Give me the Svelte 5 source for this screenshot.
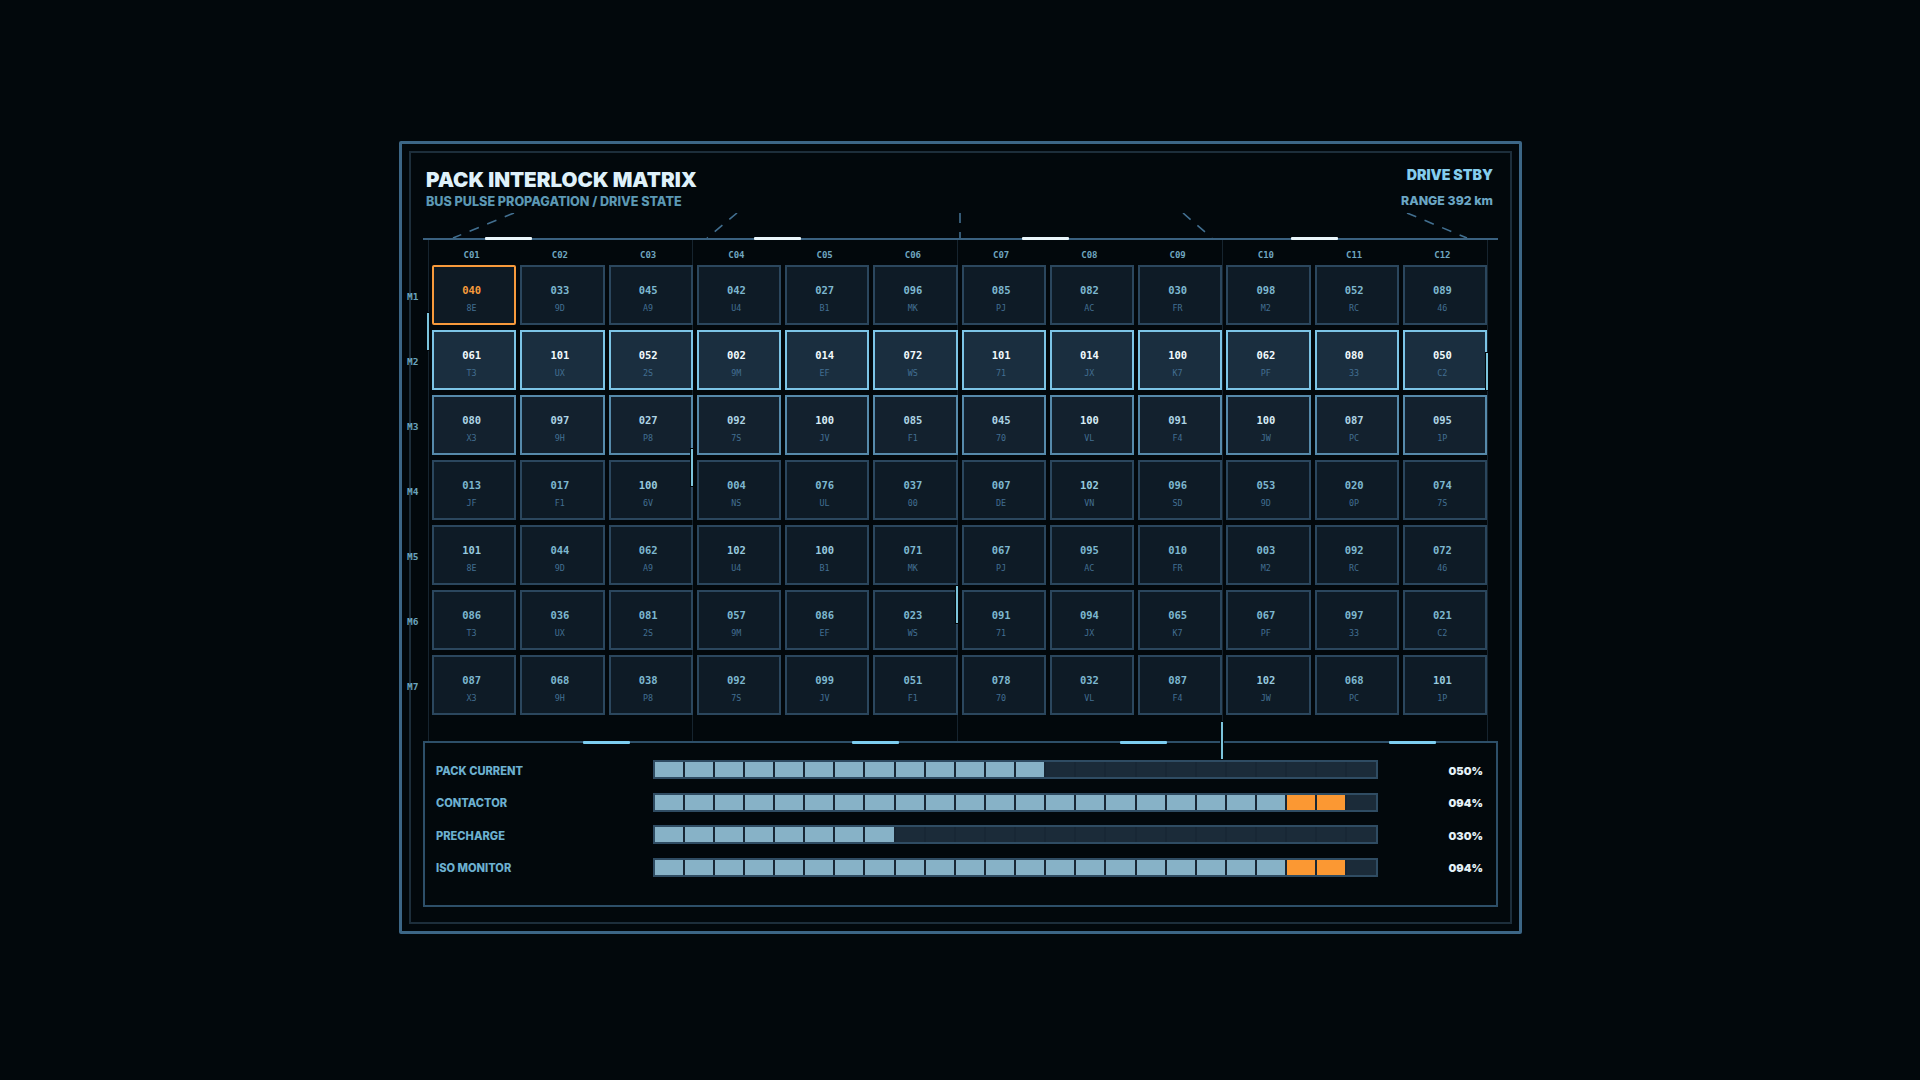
<script>
    const subs = [
        "8E 9D A9 U4 B1 MK PJ AC FR M2 RC 46",
        "T3 UX 2S 9M EF WS 71 JX K7 PF 33 C2",
        "X3 9H P8 7S JV F1 70 VL F4 JW PC 1P",
        "JF F1 6V NS UL 00 DE VN SD 9D 0P 7S",
        "8E 9D A9 U4 B1 MK PJ AC FR M2 RC 46",
        "T3 UX 2S 9M EF WS 71 JX K7 PF 33 C2",
        "X3 9H P8 7S JV F1 70 VL F4 JW PC 1P",
    ].map((r) => r.split(" "));

    const values = [
        "040 033 045 042 027 096 085 082 030 098 052 089",
        "061 101 052 002 014 072 101 014 100 062 080 050",
        "080 097 027 092 100 085 045 100 091 100 087 095",
        "013 017 100 004 076 037 007 102 096 053 020 074",
        "101 044 062 102 100 071 067 095 010 003 092 072",
        "086 036 081 057 086 023 091 094 065 067 097 021",
        "087 068 038 092 099 051 078 032 087 102 068 101",
    ].map((r) => r.split(" "));

    const columns = Array.from({ length: 12 }, (_, i) => "C" + String(i + 1).padStart(2, "0"));
    const rows = values.map((_, i) => "M" + (i + 1));

    // offsets from the matrix origin (423, 240)
    const gridLines = [5, 269, 534, 799, 1064];
    const pulses = [
        { x: 4, y: 73 },
        { x: 268, y: 209 },
        { x: 533, y: 346 },
        { x: 798, y: 482 },
        { x: 1063, y: 113 },
    ];
    const brightTop = [62, 331, 599, 868];
    const brightBottom = [160, 429, 697, 966];

    // each dash line runs from its top end, so the dash pattern starts up there
    const fan = [
        [91, 0, 30, 25],
        [314, 0, 284, 25],
        [537, 0, 537, 25],
        [760, 0, 789, 25],
        [984, 0, 1044, 25],
    ];

    const meters = [
        { name: "PACK CURRENT", pct: "050%", on: 13, warn: 0 },
        { name: "CONTACTOR", pct: "094%", on: 21, warn: 2 },
        { name: "PRECHARGE", pct: "030%", on: 8, warn: 0 },
        { name: "ISO MONITOR", pct: "094%", on: 21, warn: 2 },
    ];
    const slots = Array.from({ length: 24 }, (_, i) => i);
</script>

<div class="page">
    <div class="frame">
        <div class="inner">
            <header class="head">
                <div>
                    <h1>PACK INTERLOCK MATRIX</h1>
                    <p class="sub">BUS PULSE PROPAGATION / DRIVE STATE</p>
                </div>
                <div class="status">
                    <div class="drive">DRIVE STBY</div>
                    <div class="range">RANGE 392 km</div>
                </div>
                <svg class="fan" width="1075" height="26" viewBox="0 0 1075 26">
                    {#each fan as [x1, y1, x2, y2]}
                        <line {x1} {y1} x2={x2} y2={y2} />
                    {/each}
                </svg>
            </header>

            <div class="rule">
                {#each brightTop as x}
                    <span class="tick" style="left: {x}px"></span>
                {/each}
            </div>

            <div class="matrix">
                {#each gridLines as x}
                    <span class="vline" style="left: {x}px"></span>
                {/each}

                <div class="row-labels">
                    {#each rows as m}
                        <div class="row-label">{m}</div>
                    {/each}
                </div>

                <div class="grid">
                    {#each columns as c}
                        <div class="col-label">{c}</div>
                    {/each}
                    {#each values as row, r}
                        {#each row as v, c}
                            <div
                                class="cell"
                                class:active={r === 1}
                                class:near={r === 2}
                                class:hi={Number(v) >= 100}
                                class:fault={r === 0 && c === 0}
                            >
                                <span class="num">{v}</span>
                                <span class="tag">{subs[r][c]}</span>
                            </div>
                        {/each}
                    {/each}
                </div>
            </div>

            <section class="panel">
                {#each brightBottom as x}
                    <span class="tick soft" style="left: {x}px"></span>
                {/each}
                {#each meters as m}
                    <div class="meter">
                        <span class="name">{m.name}</span>
                        <div class="bar">
                            {#each slots as i}
                                <span
                                    class="seg"
                                    class:on={i < m.on}
                                    class:warn={i >= m.on && i < m.on + m.warn}
                                ></span>
                            {/each}
                        </div>
                        <span class="pct">{m.pct}</span>
                    </div>
                {/each}
            </section>

            {#each pulses as p}
                <span class="pulse" style="left: {p.x + 12}px; top: {p.y + 87}px"></span>
            {/each}
        </div>
    </div>
</div>

<style>
    :global(body) {
        background: #02080c;
    }

    .page {
        min-height: 1080px;
        box-sizing: border-box;
        padding: 141px 0 0 399px;
        font-family: Inter, "Liberation Sans", sans-serif;
    }

    .frame {
        width: 1123px;
        height: 793px;
        box-sizing: border-box;
        padding: 7px;
        border: 3px solid #3c6686;
        border-radius: 2px;
    }

    .inner {
        position: relative;
        height: 100%;
        box-sizing: border-box;
        padding: 0 12px;
        border: 2px solid #1d2e3b;
    }

    .head {
        position: relative;
        display: flex;
        justify-content: space-between;
        height: 85px;
        box-sizing: border-box;
        padding: 15px 5px 0 3px;
    }

    h1 {
        margin: 0;
        font-size: 20.6px;
        line-height: 24px;
        font-weight: 900;
        color: #dff1fa;
    }

    .sub {
        margin: 2px 0 0;
        font-size: 12.6px;
        line-height: 15px;
        font-weight: 800;
        color: #5c98b4;
    }

    .status {
        text-align: right;
    }

    .drive {
        margin-top: -1px;
        font-size: 14.2px;
        line-height: 16px;
        font-weight: 900;
        color: #85cdee;
    }

    .range {
        margin-top: 10px;
        font-size: 12.3px;
        line-height: 15px;
        font-weight: 800;
        color: #6ba6c4;
    }

    .fan {
        position: absolute;
        left: 0;
        bottom: -1px;
    }

    .fan line {
        stroke: #426f90;
        stroke-width: 1.6;
        stroke-dasharray: 10 9;
    }

    .rule {
        position: relative;
        height: 2px;
        background: #3a6180;
    }

    .tick {
        position: absolute;
        top: -1px;
        width: 47px;
        height: 3px;
        border-radius: 1px;
        background: #eaf6fb;
    }

    .tick.soft {
        top: -2px;
        background: #7ccdf0;
    }

    .matrix {
        position: relative;
        display: flex;
        height: 501px;
    }

    .vline {
        position: absolute;
        top: 0;
        bottom: 0;
        width: 1px;
        background: #16242f;
    }

    .row-labels {
        position: relative;
        display: grid;
        grid-template-rows: repeat(7, 60.5px);
        row-gap: 4.5px;
        align-content: start;
        flex: none;
        width: 12px;
        margin: 0 13px 0 -16px;
        padding-top: 24.5px;
        font-family: "DejaVu Sans Mono", monospace;
    }

    .row-label {
        display: flex;
        align-items: center;
        padding-top: 3px;
        font-size: 9.5px;
        font-weight: 700;
        color: #6aa3bc;
    }

    .grid {
        position: relative;
        display: grid;
        grid-template-columns: repeat(12, 84.25px);
        grid-template-rows: 20px repeat(7, 60.5px);
        gap: 4.5px 4px;
        align-content: start;
        font-family: "DejaVu Sans Mono", monospace;
    }

    .col-label {
        padding-right: 5px;
        align-self: end;
        text-align: center;
        font-size: 9px;
        line-height: 10px;
        font-weight: 700;
        color: #6fa6c0;
    }

    .cell {
        display: flex;
        flex-direction: column;
        align-items: center;
        justify-content: center;
        gap: 7.5px;
        box-sizing: border-box;
        padding: 7px 5px 0 0;
        border: 2px solid #2b475e;
        background: #0e1b26;
    }

    .num {
        font-size: 10.5px;
        line-height: 12px;
        font-weight: 700;
        color: #7db7cf;
    }

    .tag {
        font-size: 8.4px;
        line-height: 10px;
        color: #426f92;
    }

    .cell.hi .num {
        color: #97c9de;
    }

    .cell.near {
        border-color: #568aab;
        background: #13212e;
    }

    .cell.near .num {
        color: #aed4e4;
    }

    .cell.near.hi .num {
        color: #d8ecf5;
    }

    .cell.active {
        border-color: #7cc4e6;
        background: #1a2e3f;
    }

    .cell.active .num {
        color: #f2fafd;
    }

    .cell.fault {
        border-color: #f79a3c;
        border-radius: 2px;
        background: #0e1a24;
    }

    .cell.fault .num {
        color: #f79a3c;
    }

    .panel {
        position: relative;
        display: flex;
        flex-direction: column;
        gap: 13.5px;
        height: 166px;
        box-sizing: border-box;
        padding: 17px 13px 0 11px;
        border: 2px solid #2d4f69;
    }

    .panel .tick {
        margin-left: -2px;
    }

    .meter {
        display: grid;
        grid-template-columns: 216.5px 725px 1fr;
        align-items: center;
    }

    .name {
        padding-top: 2px;
        font-size: 11.1px;
        font-weight: 800;
        color: #6cb0d0;
    }

    .bar {
        display: flex;
        gap: 2px;
        height: 19px;
        box-sizing: border-box;
        border: 2px solid #2f4c63;
        background: #182735;
    }

    .seg {
        flex: 1;
        background: #1b2b39;
    }

    .seg.on {
        background: #87b2c7;
    }

    .seg.warn {
        background: #fb9833;
    }

    .pct {
        padding-top: 2px;
        text-align: right;
        font-size: 11px;
        font-weight: 900;
        color: #e4f1f7;
    }

    .pulse {
        position: absolute;
        width: 2px;
        height: 37px;
        background: #7cc4dc;
        box-shadow: 0 0 0 1px #02080c;
    }
</style>
